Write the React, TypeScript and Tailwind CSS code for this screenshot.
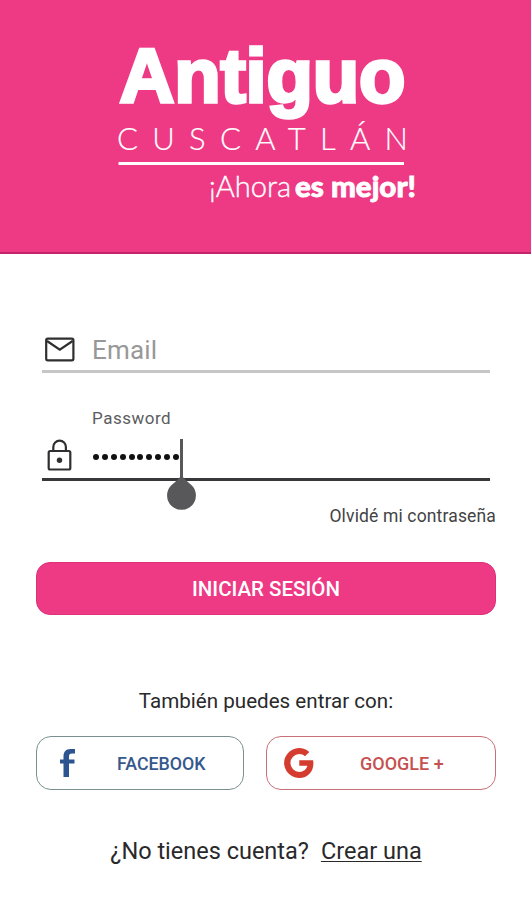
import { useState } from "react";

function Logo() {
  return (
    <svg
      width="531"
      height="252"
      viewBox="0 0 531 252"
      fill="#ffffff"
      role="img"
      aria-label="Antiguo Cuscatlán"
    >
      <text
        x="119.500"
        y="101.500"
        textLength="286"
        stroke="#ffffff"
        strokeWidth="3.400"
        className="font-['Liberation_Sans',sans-serif] text-[76px] font-bold"
      >
        Antiguo
      </text>
      <text
        x="117"
        y="149.5"
        textLength="291"
        stroke="#ffffff"
        strokeWidth="0.2"
        className="font-['Lato',sans-serif] text-[31px] font-light"
      >
        CUSCATLÁN
      </text>
      <rect x="118.500" y="162" width="285.500" height="3" />
      <text
        x="209"
        y="196.500"
        textLength="82"
        lengthAdjust="spacingAndGlyphs"
        stroke="#ffffff"
        strokeWidth="0.4"
        className="font-['Lato',sans-serif] text-[29px] font-light"
      >
        ¡Ahora
      </text>
      <text
        x="295"
        y="196.500"
        textLength="121"
        lengthAdjust="spacingAndGlyphs"
        stroke="#ffffff"
        strokeWidth="0.8"
        className="font-['Lato',sans-serif] text-[29px] font-black"
      >
        es mejor!
      </text>
    </svg>
  );
}

function MailIcon() {
  return (
    <svg width="32" height="26" viewBox="0 0 32 26" fill="none" stroke="#2f2f31" strokeWidth="2.2">
      <rect x="2.200" y="1.700" width="27.200" height="21.600" rx="1.500" />
      <path d="M3 4 15.800 12.700 28.600 4" />
    </svg>
  );
}

function LockIcon() {
  return (
    <svg width="26" height="34" viewBox="0 0 26 34" fill="none" stroke="#2f2f31" strokeWidth="2.200">
      <rect x="1.700" y="13" width="21.600" height="18.500" rx="1.500" />
      <path d="M6.300 13V9a6.300 6.300 0 0 1 12.600 0v4" />
      <circle cx="12.500" cy="22.300" r="2.700" fill="#2f2f31" stroke="none" />
    </svg>
  );
}

function FacebookIcon() {
  return (
    <svg width="16" height="28" viewBox="0 0 16 28" fill="#2c5490">
      <path d="M3.500 28V14.500H0V10.500h3.500V7.500C3.500 2.700 6 0 10.500 0H15v4.600h-3c-2.400 0-3 1-3 3V10.500h5.500v4H9V28Z" />
    </svg>
  );
}

function GoogleIcon() {
  return (
    <svg width="30" height="30" viewBox="0 0 30 30" fill="#d43c30">
      <path d="M15.300 12.200v5.600h8.100c-.9 3.600-4 6.100-8.100 6.100a8.900 8.900 0 1 1 0-17.800c2.200 0 4.200.8 5.700 2.200l4.300-4.300A15 15 0 1 0 15.300 30C23.800 30 29.400 24 29.400 15.300c0-1.100-.1-2.100-.3-3.100Z" />
    </svg>
  );
}

export default function App() {
  const [password] = useState("••••••••••");

  return (
    <div className="flex h-[900px] w-[531px] flex-col overflow-hidden bg-white font-['Roboto',sans-serif] text-[#29292b]">
      <header className="h-[254px] shrink-0 border-b-2 border-[#c42369] bg-[#ee3984]">
        <Logo />
      </header>

      <main className="flex flex-col pl-9 pr-[35px]">
        {/* Email */}
        <div className="mx-1.5 mt-[75px] flex h-[44px] items-center border-b-[3px] border-[#c6c6c6] pl-0.5">
          <MailIcon />
          <span className="ml-4 pt-px text-[26px] tracking-[0.2px] text-[#989898]">Email</span>
        </div>

        {/* Password */}
        <div className="mx-1.5 mt-[33px] flex h-[75px] flex-col border-b-[3px] border-[#38383b]">
          <label className="ml-[50px] text-[17px] leading-6 tracking-[0.5px] text-[#5c5c5e]">
            Password
          </label>
          <div className="flex h-[48px] items-center pl-[5px] pt-px">
            <LockIcon />
            <div className="ml-[20px] mt-1 flex gap-[2.900px]" aria-label={password}>
              {password.split("").map((_, i) => (
                <span key={i} className="size-[6px] rounded-full bg-[#111111]" />
              ))}
            </div>
            <div className="relative ml-px h-[39px] w-[3px] self-end bg-[#58585a]">
              {/* Text cursor handle */}
              <svg
                className="absolute -left-[13px] top-[36px] overflow-visible"
                width="30"
                height="36"
                viewBox="0 0 30 36"
                fill="#58585a"
              >
                <path d="M14.500 0Q16 3 24.900 10.500a14.400 14.400 0 1 1-20.800 0Q13 3 14.500 0Z" />
              </svg>
            </div>
          </div>
        </div>

        <a className="mt-[23px] self-end text-[17.500px] leading-6 tracking-[0.150px] text-[#434345]">
          Olvidé mi contraseña
        </a>

        <button className="mt-[34px] h-[53px] rounded-[14px] border border-[#dc3279] bg-[#ee3984] pt-0.5 text-[20.500px] font-medium text-white">
          INICIAR SESIÓN
        </button>

        <p className="mt-[72px] text-center text-[20.600px] leading-7">
          También puedes entrar con:
        </p>

        <div className="mt-[21px] flex gap-[22px]">
          <button className="flex h-[54px] w-[208px] items-center rounded-[15px] border-[1.500px] border-[#78908f] pl-[23px] text-[#35588d]">
            <FacebookIcon />
            <span className="ml-[41px] pt-0.5 text-[17.800px] font-medium">FACEBOOK</span>
          </button>
          <button className="flex h-[54px] w-[230px] items-center rounded-[15px] border-[1.500px] border-[#c77077] pl-[17px] text-[#c65050]">
            <GoogleIcon />
            <span className="ml-[46px] text-[18px] font-medium">GOOGLE +</span>
          </button>
        </div>

        <div className="mt-[46px] flex justify-center gap-3 text-[23.500px] leading-[30px]">
          <span>¿No tienes cuenta?</span>
          <a className="underline decoration-1 underline-offset-2">Crear una</a>
        </div>
      </main>
    </div>
  );
}
